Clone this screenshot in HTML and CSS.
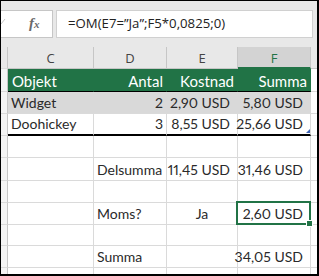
FILE: index.html
```html
<!DOCTYPE html>
<html lang="sv">
<head>
    <meta charset="UTF-8">
    <title>OM-funktion</title>
    <link rel="stylesheet" href="styles.css">
</head>
<body>

<div class="frame">
    <div class="fbar">
        <div class="fbar-buttons">
            <svg class="check" width="6" height="6" viewBox="0 0 6 6"><path d="M-2 3 L0 5 L4 0" fill="none" stroke="#c8c8c8" stroke-width="1"/></svg>
            <span class="fx">f<small>x</small></span>
        </div>
        <div class="fbar-input">=OM(E7=”Ja”;F5*0,0825;0)</div>
    </div>

    <div class="sheet">
        <!-- column headers -->
        <div class="rh colhead"></div>
        <div class="colhead">C</div>
        <div class="colhead">D</div>
        <div class="colhead">E</div>
        <div class="colhead active">F</div>
        <div class="colhead"></div>

        <!-- table header -->
        <div class="rh"></div>
        <div class="cell thead">Objekt</div>
        <div class="cell thead num">Antal</div>
        <div class="cell thead num">Kostnad</div>
        <div class="cell thead num">Summa</div>
        <div class="cell"></div>

        <div class="rh"></div>
        <div class="cell band">Widget</div>
        <div class="cell band num">2</div>
        <div class="cell band num pad">2,90 USD</div>
        <div class="cell band num pad">5,80 USD</div>
        <div class="cell"></div>

        <div class="rh"></div>
        <div class="cell last">Doohickey</div>
        <div class="cell last num">3</div>
        <div class="cell last num pad">8,55 USD</div>
        <div class="cell last num pad resize">25,66 USD</div>
        <div class="cell"></div>

        <div class="rh"></div>
        <div class="cell"></div>
        <div class="cell"></div>
        <div class="cell"></div>
        <div class="cell"></div>
        <div class="cell"></div>

        <div class="rh"></div>
        <div class="cell"></div>
        <div class="cell">Delsumma</div>
        <div class="cell num pad">11,45 USD</div>
        <div class="cell num pad">31,46 USD</div>
        <div class="cell"></div>

        <div class="rh"></div>
        <div class="cell"></div>
        <div class="cell"></div>
        <div class="cell"></div>
        <div class="cell"></div>
        <div class="cell"></div>

        <div class="rh"></div>
        <div class="cell"></div>
        <div class="cell">Moms?</div>
        <div class="cell center">Ja</div>
        <div class="cell num pad selected">2,60 USD</div>
        <div class="cell"></div>

        <div class="rh"></div>
        <div class="cell"></div>
        <div class="cell"></div>
        <div class="cell"></div>
        <div class="cell"></div>
        <div class="cell"></div>

        <div class="rh"></div>
        <div class="cell"></div>
        <div class="cell">Summa</div>
        <div class="cell"></div>
        <div class="cell num pad">34,05 USD</div>
        <div class="cell"></div>

        <div class="rh"></div>
        <div class="cell"></div>
        <div class="cell"></div>
        <div class="cell"></div>
        <div class="cell"></div>
        <div class="cell"></div>
    </div>
</div>

</body>
</html>
```

FILE: styles.css
```css
body {
    margin: 0;
    background: #fff;
}
.frame {
    width: 319px;
    height: 276px;
    box-sizing: border-box;
    border-top: 1px solid #000;
    border-left: 1px solid #000;
    border-right: 2px solid #000;
    border-bottom: 2px solid #000;
    background: #e8e8e8;
    overflow: hidden;
}
.fbar {
    display: flex;
    height: 46px;
    box-sizing: border-box;
    padding: 9px 4px 0 0;
}
.fbar-buttons {
    width: 52px;
    height: 28px;
    box-sizing: border-box;
    background: #fff;
    border: 1px solid #c6c6c6;
    border-left: none;
    position: relative;
}
.check {
    position: absolute;
    left: 0;
    top: 8px;
}
.fx {
    position: absolute;
    left: 28px;
    top: 4px;
    font-family: "Liberation Serif", serif;
    font-style: italic;
    font-weight: bold;
    font-size: 15px;
    color: #6a6a6a;
}
.fx small {
    font-size: 11px;
}
.fbar-input {
    flex: 1;
    height: 28px;
    margin-left: 3px;
    box-sizing: border-box;
    background: #fff;
    border: 1px solid #d0d0d0;
    padding-left: 11px;
    font-family: "Open Sans", sans-serif;
    font-size: 13.2px;
    line-height: 25px;
    color: #222;
}

.sheet {
    display: grid;
    grid-template-columns: 7px 86px 73px 71px 73px 1fr;
    grid-template-rows: 22px 23px 22px 22px 22px 23px 22px 22px 21px 22px 22px;
    background: #fff;
}
.colhead {
    background: #e8e8e8;
    border-right: 1px solid #c6c6c6;
    border-bottom: 1px solid #c6c6c6;
    font-family: "Open Sans", sans-serif;
    font-size: 13px;
    color: #444;
    text-align: center;
    line-height: 22px;
}
.colhead.active {
    background: #d3d3d3;
    color: #217346;
    border-bottom: 2px solid #217346;
}
.rh {
    background: #f4f4f4;
    border-right: 1px solid #c6c6c6;
    border-bottom: 1px solid #dadada;
}
.rh.colhead {
    background: #e8e8e8;
}
.cell {
    position: relative;
    box-sizing: border-box;
    border-right: 1px solid #dadada;
    border-bottom: 1px solid #dadada;
    padding: 0 3px 1px;
    font-family: "Lato", sans-serif;
    font-size: 14px;
    font-variant-numeric: proportional-nums;
    color: #2a2a2a;
    display: flex;
    align-items: flex-end;
    line-height: 18px;
    white-space: nowrap;
}
.num {
    justify-content: flex-end;
}
.pad {
    padding-right: 7px;
}
.center {
    justify-content: center;
}
.thead {
    background: #217346;
    border-right-color: #217346;
    border-bottom-color: #000;
    color: #fff;
    font-size: 15px;
    padding-left: 4px;
}
.thead.num {
    padding-right: 3px;
}
.band {
    background: #d9d9d9;
    border-right-color: #d9d9d9;
}
.last {
    border-bottom: 2px solid #000;
}
.resize::after {
    content: "";
    position: absolute;
    right: 0;
    bottom: 1px;
    border-left: 4px solid transparent;
    border-bottom: 4px solid #3d63b5;
}
.selected::after {
    content: "";
    position: absolute;
    left: -2px;
    top: -2px;
    right: -1px;
    bottom: -1px;
    border: 2px solid #217346;
}
.selected::before {
    content: "";
    position: absolute;
    right: -3px;
    bottom: -3px;
    width: 5px;
    height: 5px;
    background: #217346;
    border: 1px solid #fff;
    z-index: 1;
}
```
